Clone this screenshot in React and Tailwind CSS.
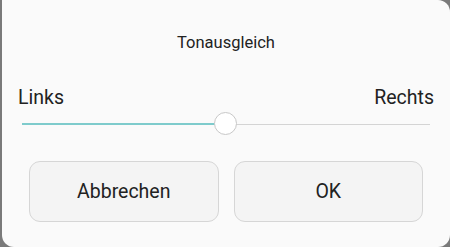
const App = () => {
    return (
        <div className="w-[450px] h-[247px] bg-[#7a7a7a] flex" style={{ fontFamily: "Roboto, 'Liberation Sans', sans-serif" }}>
            <div className="ml-[2px] flex-1 bg-[#fafafa] rounded-tr-[12px] rounded-b-[12px] flex flex-col">
                <div className="h-[86px] pt-[32px] text-center text-[16.5px] leading-[21px] text-[#222]">
                    Tonausgleich
                </div>
                <div className="flex justify-between px-[16px] text-[19.5px] leading-[24px] text-[#222]">
                    <span>Links</span>
                    <span>Rechts</span>
                </div>
                <div className="relative mx-[20px] mt-[13px] h-[2px] flex">
                    <div className="w-[203px] h-[2px] bg-[#7ecbcc]" />
                    <div className="flex-1 h-[1px] mt-[0.5px] bg-[#d4d4d4]" />
                    <div className="absolute left-[192px] top-[-11px] w-[23px] h-[23px] rounded-full bg-white border border-[#c8c8c8]" />
                </div>
                <div className="flex gap-[15px] px-[27px] mt-[36px]">
                    <button className="flex-1 h-[61px] rounded-[11px] border border-[#d6d6d6] bg-[#f4f4f4] text-[19.5px] text-[#222]">
                        Abbrechen
                    </button>
                    <button className="flex-1 h-[61px] rounded-[11px] border border-[#d6d6d6] bg-[#f4f4f4] text-[19.5px] text-[#222]">
                        OK
                    </button>
                </div>
            </div>
        </div>
    );
};

export default App;
